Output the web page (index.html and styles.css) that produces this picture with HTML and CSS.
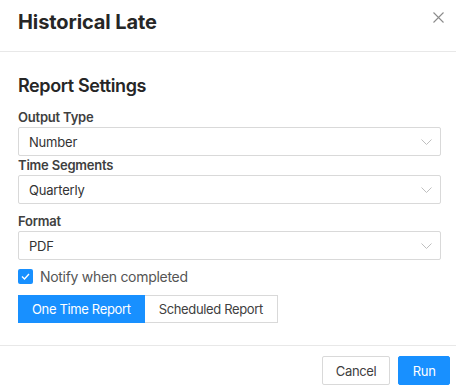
FILE: index.html
```html
<!DOCTYPE html>
<html lang="en">
<head>
    <meta charset="UTF-8">
    <meta name="viewport" content="width=device-width, initial-scale=1.0">
    <title>Historical Late</title>
    <link rel="stylesheet" href="styles.css">
</head>
<body>
    <div class="modal">
        <div class="modal-header">
            <h1>Historical Late</h1>
            <span class="close">
                <svg width="11" height="11" viewBox="0 0 11 11">
                    <path d="M0.5 0.5 L10.5 10.5 M10.5 0.5 L0.5 10.5" stroke="#8c8c8c" stroke-width="1.1" fill="none"/>
                </svg>
            </span>
        </div>

        <div class="modal-body">
            <h2>Report Settings</h2>

            <div class="form-item">
                <label>Output Type</label>
                <div class="select">
                    <span>Number</span>
                    <svg class="arrow" width="11" height="6" viewBox="0 0 11 6"><path d="M0.5 0.5 L5.5 5.5 L10.5 0.5" stroke="#bfbfbf" fill="none"/></svg>
                </div>
            </div>

            <div class="form-item">
                <label>Time Segments</label>
                <div class="select">
                    <span>Quarterly</span>
                    <svg class="arrow" width="11" height="6" viewBox="0 0 11 6"><path d="M0.5 0.5 L5.5 5.5 L10.5 0.5" stroke="#bfbfbf" fill="none"/></svg>
                </div>
            </div>

            <div class="form-item spaced">
                <label>Format</label>
                <div class="select">
                    <span>PDF</span>
                    <svg class="arrow" width="11" height="6" viewBox="0 0 11 6"><path d="M0.5 0.5 L5.5 5.5 L10.5 0.5" stroke="#bfbfbf" fill="none"/></svg>
                </div>
            </div>

            <label class="check-row">
                <span class="checkbox">
                    <svg width="15" height="15" viewBox="0 0 15 15"><path d="M4 7.5 L6.5 10 L11 5" stroke="#fff" stroke-width="1.4" fill="none"/></svg>
                </span>
                Notify when completed
            </label>

            <div class="segmented">
                <button class="seg active">One Time Report</button>
                <button class="seg">Scheduled Report</button>
            </div>
        </div>

        <div class="modal-footer">
            <button class="btn">Cancel</button>
            <button class="btn primary">Run</button>
        </div>
    </div>
</body>
</html>
```

FILE: styles.css
```css
body {
    margin: 0;
    padding: 0;
    font-family: Inter, "Liberation Sans", Arial, sans-serif;
    background: #fff;
    color: #333;
}

.modal {
    width: 456px;
    height: 388px;
    background: #fff;
}

.modal-header {
    display: flex;
    justify-content: space-between;
    align-items: flex-start;
    height: 41px;
    padding: 10px 12px 0 18px;
    border-bottom: 1px solid #e8e8e8;
}

h1 {
    margin: 0;
    font-size: 20px;
    line-height: 24px;
    font-weight: 700;
    color: #262626;
    letter-spacing: -0.1px;
}

.close {
    display: block;
    margin-top: 2px;
    line-height: 0;
}

.modal-body {
    padding: 22px 15px 22px 18px;
}

h2 {
    margin: 0 0 10px 0;
    font-size: 18px;
    line-height: 24px;
    font-weight: 600;
    color: #262626;
    letter-spacing: -0.4px;
}

.form-item label {
    display: block;
    font-size: 13px;
    line-height: 18px;
    font-weight: 600;
    color: #404040;
    margin-bottom: 1px;
    letter-spacing: -0.2px;
}

.form-item.spaced {
    margin-top: 8px;
}

.select {
    display: flex;
    align-items: center;
    justify-content: space-between;
    height: 29px;
    box-sizing: border-box;
    padding: 0 8px 0 10px;
    border: 1px solid #d9d9d9;
    border-radius: 2px;
    font-size: 13px;
    color: #333;
    letter-spacing: -0.2px;
}

.check-row {
    display: flex;
    align-items: center;
    gap: 7px;
    margin-top: 9px;
    font-size: 14px;
    line-height: 15px;
    color: #555;
    letter-spacing: -0.3px;
}

.checkbox {
    display: block;
    width: 15px;
    height: 15px;
    background: #1890ff;
    border-radius: 2px;
    line-height: 0;
}

.segmented {
    display: flex;
    margin-top: 11px;
}

.seg {
    height: 28px;
    padding: 0 14px;
    border: 1px solid #d9d9d9;
    background: #fff;
    font-family: inherit;
    font-size: 13px;
    color: #404040;
    letter-spacing: -0.35px;
    cursor: pointer;
}

.seg.active {
    padding: 0 13px;
    background: #1890ff;
    border-color: #1890ff;
    color: #fff;
}

.seg + .seg {
    border-left: none;
}

.modal-footer {
    display: flex;
    justify-content: flex-end;
    gap: 8px;
    padding: 10px 6px 0 0;
    border-top: 1px solid #e8e8e8;
}

.btn {
    height: 29px;
    padding: 0 13px;
    border: 1px solid #d9d9d9;
    border-radius: 2px;
    background: #fff;
    font-family: inherit;
    font-size: 13px;
    color: #404040;
    letter-spacing: -0.35px;
    cursor: pointer;
}

.btn.primary {
    padding: 0 13.5px;
    background: #1890ff;
    border-color: #1890ff;
    color: #fff;
}
```
